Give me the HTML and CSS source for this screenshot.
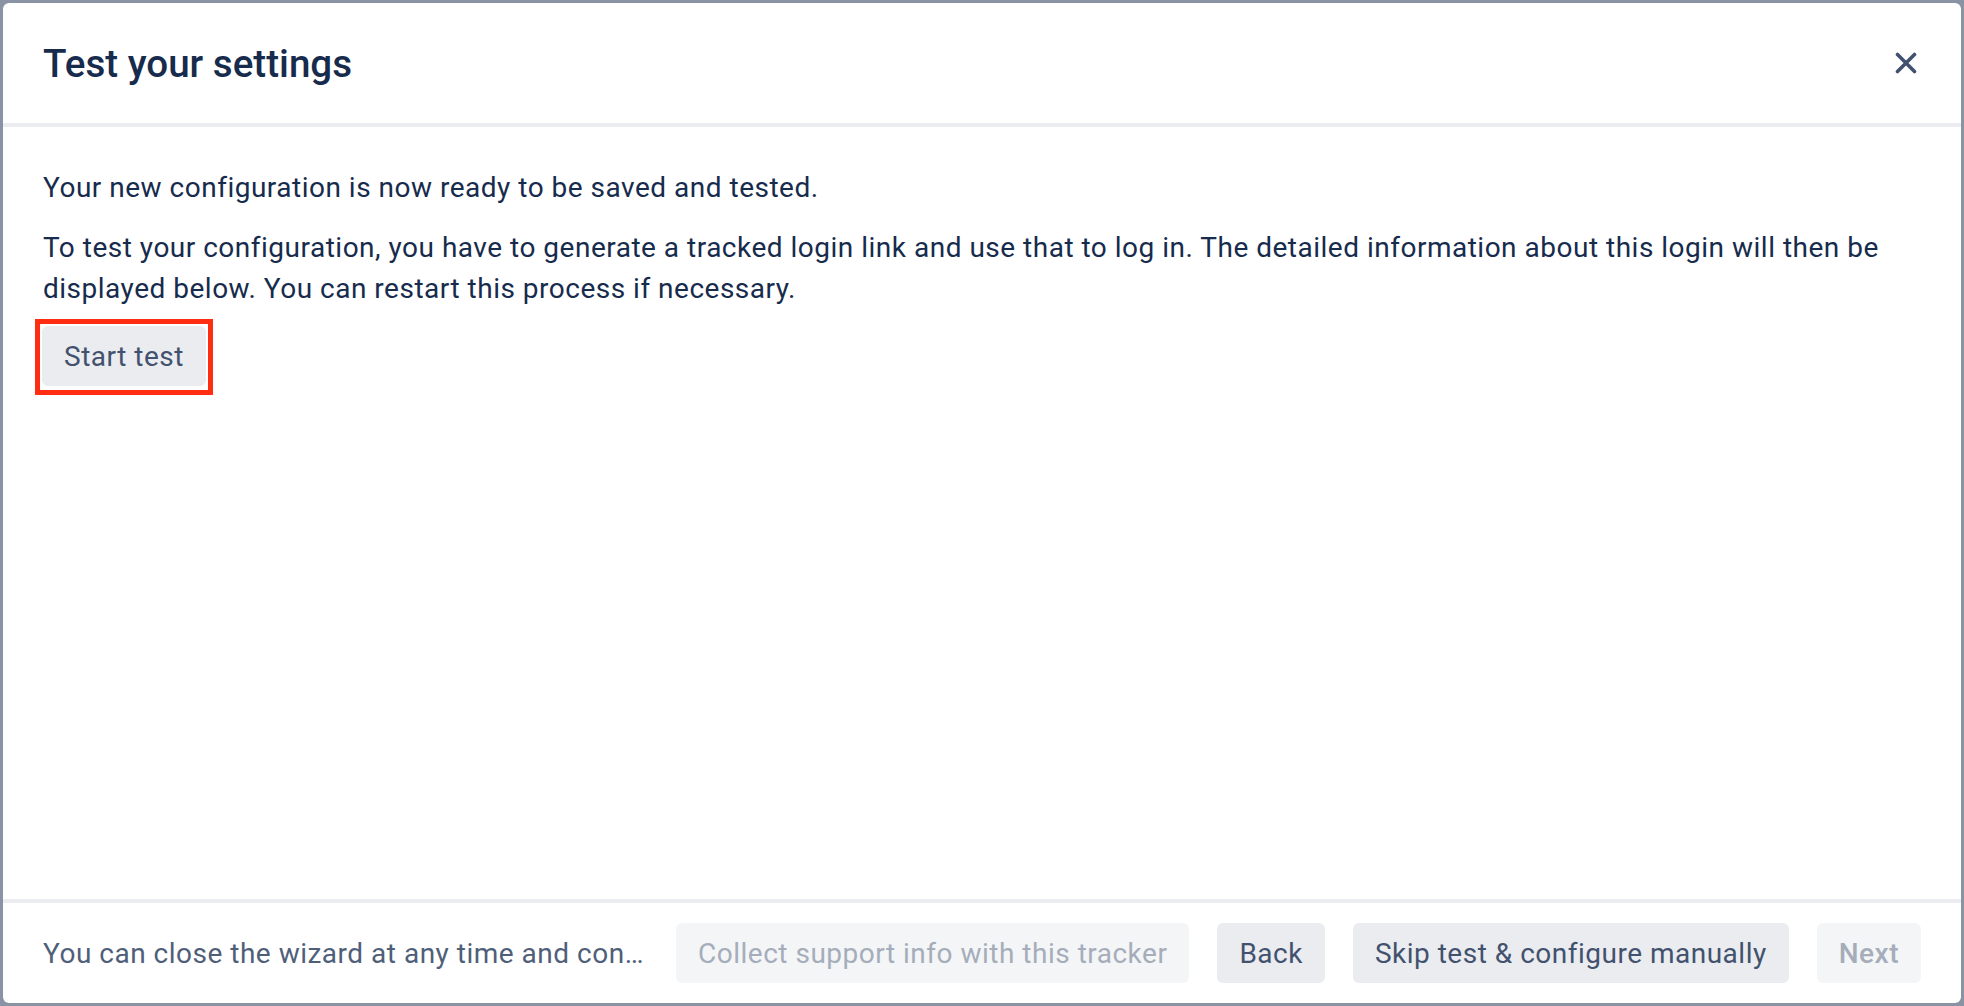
FILE: index.html
```html
<!DOCTYPE html>
<html lang="en">
<head>
  <meta charset="UTF-8" />
  <title>Test your settings</title>
  <link rel="stylesheet" href="styles.css">
</head>
<body>
  <div class="modal">
    <div class="modal-header">
      <h1>Test your settings</h1>
      <button class="close-btn" aria-label="Close">
        <svg width="22" height="22" viewBox="0 0 22 22">
          <path d="M2.5 2.5 L19.5 19.5 M19.5 2.5 L2.5 19.5" stroke="#42526e" stroke-width="3.6" stroke-linecap="round" fill="none" />
        </svg>
      </button>
    </div>

    <div class="modal-body">
      <p>Your new configuration is now ready to be saved and tested.</p>
      <p>To test your configuration, you have to generate a tracked login link and use that to log in. The detailed information about this login will then be displayed below. You can restart this process if necessary.</p>
      <span class="highlight"><button class="btn">Start test</button></span>
    </div>

    <div class="modal-footer">
      <div class="footer-note">You can close the wizard at any time and continue later from the same step.</div>
      <button class="btn" disabled>Collect support info with this tracker</button>
      <button class="btn">Back</button>
      <button class="btn">Skip test &amp; configure manually</button>
      <button class="btn primary" disabled>Next</button>
    </div>
  </div>
</body>
</html>
```

FILE: styles.css
```css
* {
  box-sizing: border-box;
}

body {
  margin: 0;
  padding: 3px;
  height: 100vh;
  background-color: #8993a4;
  font-family: Roboto, "Noto Sans", sans-serif;
  color: #172b4d;
}


.modal {
  height: 100%;
  background-color: #fff;
  border-radius: 6px;
  display: flex;
  flex-direction: column;
  overflow: hidden;
}


.modal-header {
  height: 124px;
  padding: 0 44px 0 40px;
  display: flex;
  align-items: center;
  justify-content: space-between;
  border-bottom: 4px solid #ebecf0;
}

.modal-header h1 {
  margin: 0;
  font-size: 38.6px;
  font-weight: 500;
  color: #172b4d;
}

.close-btn {
  background: none;
  border: none;
  padding: 0;
  width: 22px;
  height: 22px;
  cursor: pointer;
}

.close-btn svg {
  display: block;
}


.modal-body {
  flex: 1;
  padding: 40px 40px;
}

.modal-body p {
  margin: 0 0 19px;
  font-size: 28px;
  line-height: 41px;
  letter-spacing: 0.5px;
}

.modal-body p + p {
  margin-bottom: 10px;
}


.btn {
  height: 60px;
  padding: 0 22px;
  font-family: inherit;
  font-size: 28px;
  letter-spacing: 0.5px;
  color: #42526e;
  background-color: #ebecf0;
  border: none;
  border-radius: 6px;
  white-space: nowrap;
  cursor: pointer;
}

.btn:disabled {
  background-color: #f4f5f7;
  color: #a5adba;
  cursor: default;
}

.btn.primary {
  font-weight: 500;
}

/* red annotation box drawn round the button */
.highlight {
  display: inline-block;
  margin-left: -8px;
  border: 5px solid #ff2e12;
  padding: 2px 2px 4px;
}

.highlight .btn {
  display: block;
}


.modal-footer {
  border-top: 4px solid #ebecf0;
  padding: 20px 40px;
  display: flex;
  align-items: center;
  gap: 28px;
}

.footer-note {
  flex: 1;
  min-width: 0;
  font-size: 28px;
  letter-spacing: 0.5px;
  color: #505f79;
  white-space: nowrap;
  overflow: hidden;
  text-overflow: ellipsis;
}
```
